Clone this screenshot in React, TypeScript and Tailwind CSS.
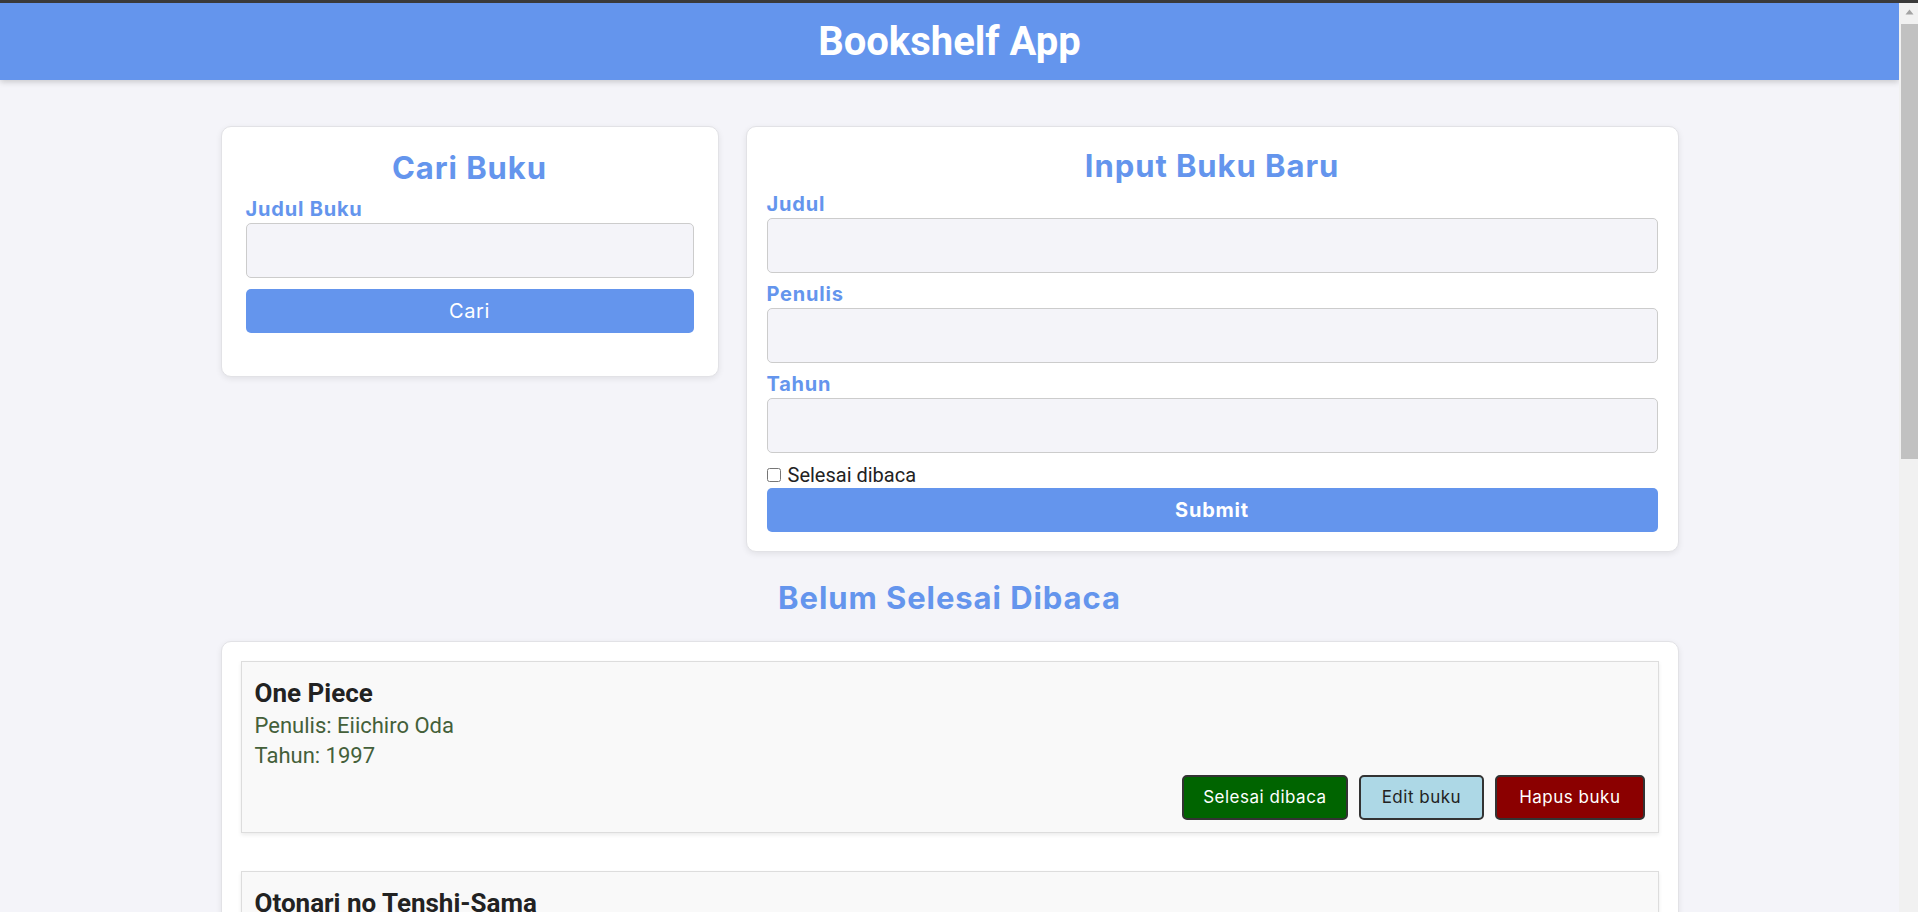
import React from 'react';

const books = [
  { id: 1, title: 'One Piece', author: 'Eiichiro Oda', year: 1997, done: false },
  { id: 2, title: 'Otonari no Tenshi-Sama', author: 'Saekisan', year: 2019, done: false },
  { id: 3, title: 'Naruto', author: 'Masashi Kishimoto', year: 1999, done: false },
  { id: 4, title: 'Laskar Pelangi', author: 'Andrea Hirata', year: 2005, done: true },
  { id: 5, title: 'Bumi Manusia', author: 'Pramoedya Ananta Toer', year: 1980, done: true },
];

// Montserrat isn't available, Inter with a bit of tracking is the closest
const mont = 'font-["Inter","Noto_Sans",sans-serif]';

const BookItem = ({ book }: { book: (typeof books)[number] }) => (
  <article className="bg-[#f9f9f9] border border-[#dddddd] shadow-[0_2px_4px_rgba(0,0,0,0.08)] px-[13px] pt-[16px] pb-[12px]">
    <h3 className="font-['Roboto',sans-serif] font-bold text-[26px] leading-[30px] text-[#222222]">{book.title}</h3>
    <p className="font-['Roboto',sans-serif] text-[22px] leading-[30px] text-[#44603a] mt-[3px]">Penulis: {book.author}</p>
    <p className="font-['Roboto',sans-serif] text-[22px] leading-[30px] text-[#44603a]">Tahun: {book.year}</p>
    <div className={`flex justify-end gap-[11px] mt-[4px] ${mont} text-[17px] tracking-[0.03em]`}>
      <button className="h-[45px] px-[19px] rounded-[5px] border-2 border-[#333333] bg-[#006400] text-white">
        {book.done ? 'Belum selesai dibaca' : 'Selesai dibaca'}
      </button>
      <button className="h-[45px] px-[21px] rounded-[5px] border-2 border-[#333333] bg-[#add8e6] text-[#222222]">
        Edit buku
      </button>
      <button className="h-[45px] px-[22px] rounded-[5px] border-2 border-[#333333] bg-[#8b0000] text-white">
        Hapus buku
      </button>
    </div>
  </article>
);

const App: React.FC = () => {
  const unread = books.filter((b) => !b.done);
  const read = books.filter((b) => b.done);

  return (
    <div className="h-screen flex flex-col overflow-hidden">
      <div className="h-[3px] shrink-0 bg-[#3a3a3a]" />
      <div className="flex flex-1 min-h-0">
        <div className="flex-1 min-w-0 overflow-hidden bg-[#f4f4f9]">
          {/* Header */}
          <header className="h-[77px] bg-[#6495ed] flex items-center justify-center shadow-[0_2px_6px_rgba(0,0,0,0.18)]">
            <h1 className="font-['Roboto',sans-serif] font-bold text-[40px] text-white leading-none">Bookshelf App</h1>
          </header>

          <main className={`w-[1458px] mx-auto pt-[46px] pb-[60px] ${mont}`}>
            <div className="grid grid-cols-[498px_1fr] gap-[27px] items-start">
              {/* Search */}
              <section className="bg-white rounded-[10px] border border-[#e2e2e6] shadow-[0_2px_6px_rgba(0,0,0,0.08)] px-[24px] pt-[23px] pb-[43px]">
                <h2 className="text-center font-bold text-[31px] tracking-[0.03em] leading-[36px] text-[#6495ed]">Cari Buku</h2>
                <form className="flex flex-col mt-[12px]" onSubmit={(e) => e.preventDefault()}>
                  <label className="font-bold text-[20px] tracking-[0.04em] leading-[23px] text-[#6495ed]">Judul Buku</label>
                  <input className="mt-[2px] h-[55px] rounded-[5px] border border-[#cccccc] bg-[#f4f4f9] px-3" />
                  <button className="mt-[11px] h-[44px] rounded-[5px] bg-[#6495ed] text-white text-[20px] tracking-[0.03em]">Cari</button>
                </form>
              </section>

              {/* Input */}
              <section className="bg-white rounded-[10px] border border-[#e2e2e6] shadow-[0_2px_6px_rgba(0,0,0,0.08)] px-[20px] pt-[21px] pb-[19px]">
                <h2 className="text-center font-bold text-[31px] tracking-[0.03em] leading-[36px] text-[#6495ed]">Input Buku Baru</h2>
                <form className="flex flex-col" onSubmit={(e) => e.preventDefault()}>
                  {['Judul', 'Penulis', 'Tahun'].map((label, i) => (
                    <div key={label} className={`flex flex-col ${i === 0 ? 'mt-[8px]' : 'mt-[9px]'}`}>
                      <label className="font-bold text-[20px] tracking-[0.04em] leading-[25px] text-[#6495ed]">{label}</label>
                      <input className="mt-[1px] h-[55px] rounded-[5px] border border-[#cccccc] bg-[#f4f4f9] px-3" />
                    </div>
                  ))}
                  <label className="flex items-center gap-[7px] mt-[11px] h-[21px] font-['Roboto',sans-serif] text-[20px] text-[#222222]">
                    <input type="checkbox" className="w-[14px] h-[14px] m-0" />
                    Selesai dibaca
                  </label>
                  <button className="mt-[3px] h-[44px] rounded-[5px] bg-[#6495ed] text-white font-bold text-[20px] tracking-[0.04em]">Submit</button>
                </form>
              </section>
            </div>

            {/* Belum selesai */}
            <h2 className="text-center font-bold text-[31px] tracking-[0.03em] leading-[36px] text-[#6495ed] mt-[28px]">Belum Selesai Dibaca</h2>
            <section className="mt-[25px] bg-white rounded-[10px] border border-[#e2e2e6] shadow-[0_2px_6px_rgba(0,0,0,0.08)] p-[19px] flex flex-col gap-[38px]">
              {unread.map((b) => (
                <BookItem key={b.id} book={b} />
              ))}
            </section>

            {/* Selesai */}
            <h2 className="text-center font-bold text-[31px] tracking-[0.03em] leading-[36px] text-[#6495ed] mt-[28px]">Selesai Dibaca</h2>
            <section className="mt-[25px] bg-white rounded-[10px] border border-[#e2e2e6] shadow-[0_2px_6px_rgba(0,0,0,0.08)] p-[19px] flex flex-col gap-[38px]">
              {read.map((b) => (
                <BookItem key={b.id} book={b} />
              ))}
            </section>
          </main>
        </div>

        {/* Scrollbar */}
        <div className="w-[19px] shrink-0 bg-[#f1f1f1] flex flex-col items-end">
          <div className="w-[17px] h-[17px] flex items-center justify-center">
            <svg width="9" height="6" viewBox="0 0 9 6">
              <path d="M4.5 0.5 L8.5 5.5 L0.5 5.5 Z" fill="#a3a3a3" />
            </svg>
          </div>
          <div className="w-[17px] h-[435px] mt-[4px] bg-[#c1c1c1]" />
        </div>
      </div>
    </div>
  );
};

export default App;
